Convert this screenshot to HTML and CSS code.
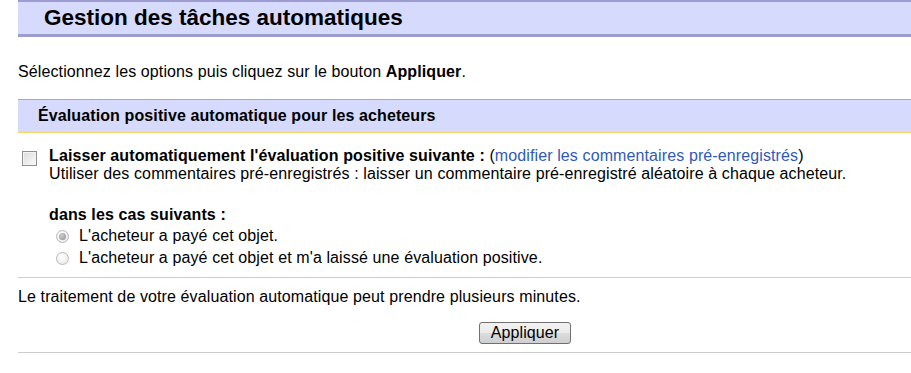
FILE: index.html
```html
<!DOCTYPE html>
<html lang="fr">
<head>
<meta charset="utf-8">
<title>Gestion des tâches automatiques</title>
<link rel="stylesheet" href="styles.css">
</head>
<body>
<div class="page">
  <div class="title-band"><h1>Gestion des tâches automatiques</h1></div>
  <p class="intro">Sélectionnez les options puis cliquez sur le bouton <b>Appliquer</b>.</p>
  <div class="section-head">Évaluation positive automatique pour les acheteurs</div>
  <div class="option">
    <input type="checkbox" class="check">
    <div class="option-body">
      <div class="option-title"><b>Laisser automatiquement l'évaluation positive suivante :</b> (<a href="#">modifier les commentaires pré-enregistrés</a>)</div>
      <div>Utiliser des commentaires pré-enregistrés : laisser un commentaire pré-enregistré aléatoire à chaque acheteur.</div>
      <div class="cases-title"><b>dans les cas suivants :</b></div>
      <div class="radios">
        <label class="radio-row"><span class="radio checked"></span>L'acheteur a payé cet objet.</label>
        <label class="radio-row"><span class="radio"></span>L'acheteur a payé cet objet et m'a laissé une évaluation positive.</label>
      </div>
    </div>
  </div>
  <div class="rule"></div>
  <p class="note">Le traitement de votre évaluation automatique peut prendre plusieurs minutes.</p>
  <div class="actions"><button class="btn">Appliquer</button></div>
  <div class="rule"></div>
</div>
</body>
</html>
```
FILE: styles.css
```css
html, body {
  margin: 0;
  padding: 0;
  background: #fff;
}
body {
  font-family: "Liberation Sans", Arial, sans-serif;
  font-size: 16px;
  line-height: 18px;
  letter-spacing: 0.11px;
  color: #000;
}
.page {
  padding-left: 18px;
}
.title-band {
  background: #d6dafd;
  border-top: 2px solid #9c9cd0;
  border-bottom: 3px solid #9c9cd0;
  height: 32px;
  padding-left: 26px;
}
.title-band h1 {
  margin: 0;
  font-size: 22.5px;
  line-height: 32px;
  font-weight: bold;
  letter-spacing: 0;
}
.intro {
  margin: 26px 0 0;
}
.section-head {
  margin-top: 18px;
  background: #d6dafd;
  border-top: 1px solid #aaaaaa;
  border-bottom: 1px solid #f7d56a;
  height: 32px;
  line-height: 32px;
  padding-left: 20px;
  font-weight: bold;
}
.option {
  display: flex;
  margin-top: 14px;
}
.check {
  appearance: none;
  -webkit-appearance: none;
  width: 15px;
  height: 15px;
  margin: 4px 12px 0 4px;
  border: 1px solid #8f8f8f;
  background: linear-gradient(135deg, #dcdcdc, #fafafa);
  box-shadow: inset 0 0 0 1px #f4f4f4;
  flex: none;
}
.option-body a {
  color: #2f5ab8;
  text-decoration: none;
}
.cases-title {
  margin-top: 23px;
}
.radios {
  margin-top: 1px;
}
.radio-row {
  display: flex;
  align-items: center;
  height: 22px;
  padding-left: 7px;
}
.radio {
  width: 11px;
  height: 11px;
  border-radius: 50%;
  border: 1px solid #b8b8b8;
  background: radial-gradient(circle at 40% 35%, #fff, #e6e6e6);
  margin-right: 10px;
  position: relative;
  flex: none;
}
.radio.checked::after {
  content: "";
  position: absolute;
  left: 2px;
  top: 2px;
  width: 7px;
  height: 7px;
  border-radius: 50%;
  background: radial-gradient(circle at 40% 35%, #d0d0d0, #8a8a8a);
}
.rule {
  height: 1px;
  background: #cccccc;
}
.option + .rule {
  margin-top: 8px;
}
.note {
  margin: 10px 0 0;
}
.actions {
  margin-top: 16px;
  padding-left: 461px;
  margin-bottom: 8px;
}
.btn {
  font-family: "Liberation Sans", Arial, sans-serif;
  font-size: 16px;
  letter-spacing: 0.11px;
  height: 22px;
  width: 92px;
  padding: 0;
  color: #000;
  border: 1px solid #707070;
  border-radius: 3px;
  background: linear-gradient(#f2f2f2, #ebebeb 50%, #dddddd 50%, #cfcfcf);
  display: block;
}
```
